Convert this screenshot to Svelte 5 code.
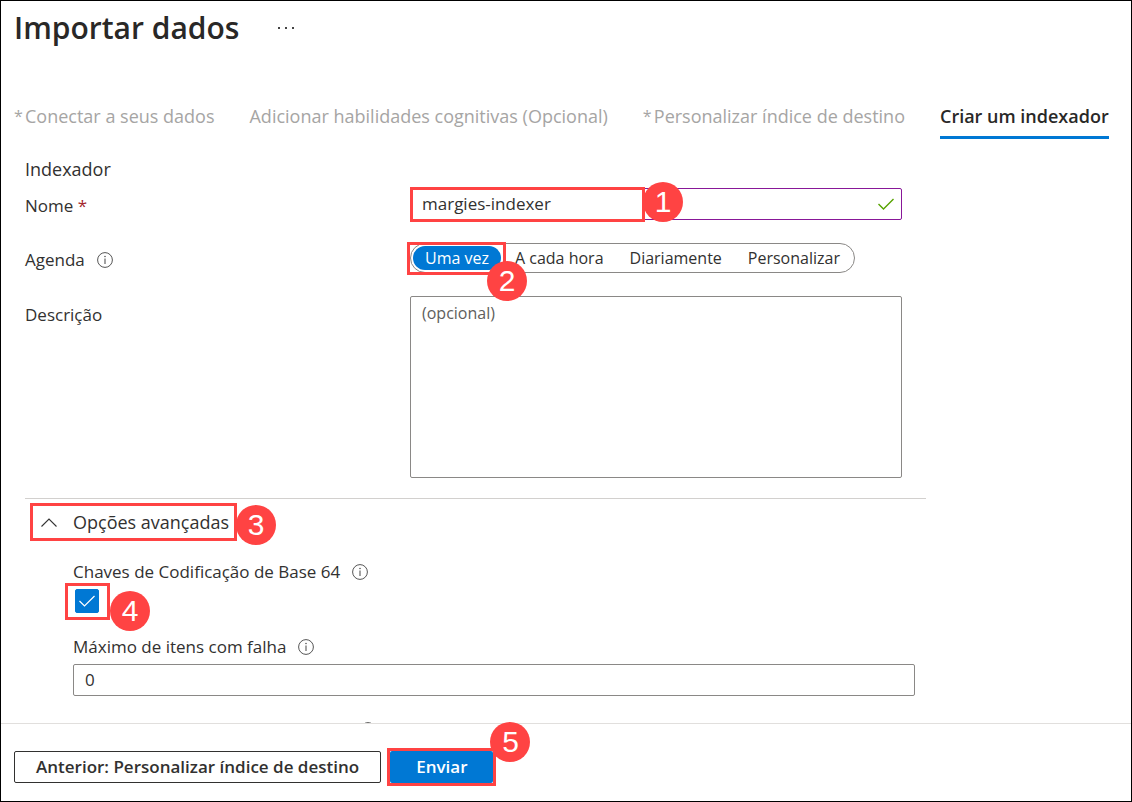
<script>
  const tabs = [
    { label: 'Conectar a seus dados', required: true },
    { label: 'Adicionar habilidades cognitivas (Opcional)' },
    { label: 'Personalizar índice de destino', required: true },
    { label: 'Criar um indexador', active: true }
  ];
  const schedules = ['Uma vez', 'A cada hora', 'Diariamente', 'Personalizar'];

  let name = $state('margies-indexer');
  let schedule = $state('Uma vez');
  let description = $state('');
  let open = $state(true);
  let base64 = $state(true);
  let maxFailed = $state('0');
</script>

{#snippet info(label)}
  <button class="info" type="button" aria-label={label}>
    <svg viewBox="0 0 16 16" width="16" height="16" aria-hidden="true">
      <circle cx="8" cy="8" r="7.4" fill="none" stroke="#555" stroke-width="1" />
      <path d="M8 6.6V12" stroke="#555" stroke-width="1.1" />
      <circle cx="8" cy="4.5" r="0.8" fill="#555" />
    </svg>
  </button>
{/snippet}

<div class="page">
  <header>
    <h1>Importar dados</h1>
    <button class="more" type="button" aria-label="Mais opções">
      <svg viewBox="0 0 16 4" width="16" height="4" aria-hidden="true">
        <path d="M0 1h2v2H0zM7 1h2v2H7zM14 1h2v2h-2z" fill="#444" />
      </svg>
    </button>
  </header>

  <nav>
    {#each tabs as tab}
      <button class="tab" class:active={tab.active} type="button">
        {#if tab.required}<span class="star">*</span>{/if}<span class="tab-label">{tab.label}</span>
      </button>
    {/each}
  </nav>

  <main>
    <h2>Indexador</h2>
    <div class="fields">
      <label class="caption" for="name">Nome <span class="required">*</span></label>
      <div class="control">
        <input id="name" class="text valid" type="text" bind:value={name} />
        <svg class="valid-mark" viewBox="0 0 16 12" width="16" height="12" aria-hidden="true">
          <path d="M0.5 6L5.5 11L15.5 1" fill="none" stroke="#57a300" stroke-width="1.4" />
        </svg>
        <span class="mark mark-name"><span class="badge">1</span></span>
      </div>

      <div class="caption label-row" id="schedule-label">Agenda {@render info('Sobre a agenda')}</div>
      <div class="control">
        <div class="pills" role="radiogroup" aria-labelledby="schedule-label">
          {#each schedules as item}
            <label class="pill" class:selected={schedule === item}>
              <input type="radio" name="schedule" value={item} bind:group={schedule} />{item}
            </label>
          {/each}
        </div>
        <span class="mark mark-schedule"><span class="badge">2</span></span>
      </div>

      <label class="caption top" for="description">Descrição</label>
      <textarea id="description" placeholder="(opcional)" bind:value={description}></textarea>
    </div>

    <section>
      <button class="expander" type="button" aria-expanded={open} onclick={() => (open = !open)}>
        <svg viewBox="0 0 16 9" width="16" height="9" aria-hidden="true">
          <path d="M0.5 8.5L8 1L15.5 8.5" fill="none" stroke="#333" stroke-width="1.1" />
        </svg>
        <span>Opções avançadas</span>
        <span class="mark mark-expander"><span class="badge">3</span></span>
      </button>
      {#if open}
        <div class="advanced">
          <div class="label-row">
            <label for="base64">Chaves de Codificação de Base 64</label>
            {@render info('Sobre as chaves')}
          </div>
          <div class="check">
            <input id="base64" type="checkbox" bind:checked={base64} />
            {#if base64}
              <svg viewBox="0 0 16 12" width="16" height="12" aria-hidden="true">
                <path d="M0.5 6L5.5 11L15.5 1" fill="none" stroke="#fff" stroke-width="1.2" />
              </svg>
            {/if}
            <span class="mark mark-check"><span class="badge">4</span></span>
          </div>
          <div class="label-row">
            <label for="max-failed">Máximo de itens com falha</label>
            {@render info('Sobre o máximo de itens')}
          </div>
          <input id="max-failed" class="text" type="text" bind:value={maxFailed} />
          <div class="label-row next">{@render info('Sobre o lote')}</div>
        </div>
      {/if}
    </section>
  </main>

  <footer>
    <button class="secondary" type="button">Anterior: Personalizar índice de destino</button>
    <div class="submit">
      <button class="primary" type="button">Enviar</button>
      <span class="mark mark-submit"><span class="badge">5</span></span>
    </div>
  </footer>
</div>

<style>
  :global(body) {
    background: #fff;
  }
  .page,
  .page * {
    box-sizing: border-box;
  }
  .page {
    display: flex;
    flex-direction: column;
    height: 100vh;
    border: 1px solid #000;
    color: #323130;
    font: 18px/24px 'Open Sans', 'Noto Sans', sans-serif;
  }
  button,
  input,
  textarea {
    margin: 0;
    color: inherit;
    font: inherit;
  }
  button {
    padding: 0;
    border: 0;
    background: none;
    cursor: pointer;
  }
  svg {
    display: block;
    flex: none;
  }
  header {
    display: flex;
    align-items: center;
    gap: 39px;
    padding: 7px 13px 6px;
  }
  h1 {
    margin: 0;
    font-size: 30px;
    line-height: 40px;
    font-weight: 600;
    color: #292827;
  }
  nav {
    display: flex;
    flex: none;
    gap: 35px;
    padding: 50px 13px 0;
    white-space: nowrap;
  }
  .tab {
    display: flex;
    padding: 0 0 8px;
    border-bottom: 3px solid transparent;
    color: #a6a5a4;
  }
  .tab.active {
    border-color: #0078d4;
    color: #292827;
    font-weight: 600;
  }
  .star {
    width: 11px;
    text-align: left;
    font-size: 16px;
  }
  main {
    flex: 1;
    min-height: 0;
    overflow: hidden;
    padding: 18px 24px 0;
  }
  h2 {
    margin: 0 0 7px;
    font: inherit;
  }
  .fields {
    display: grid;
    grid-template-columns: 385px minmax(0, 1fr);
    row-gap: 23px;
    align-items: center;
    max-width: 877px;
    font-size: 17px;
  }
  .caption {
    padding-top: 3px;
  }
  .required {
    color: #a4262c;
  }
  .label-row {
    display: flex;
    align-items: center;
    gap: 12px;
  }
  .info {
    flex: none;
  }
  .control {
    position: relative;
  }
  .text {
    display: block;
    width: 100%;
    height: 32px;
    padding: 0 11px 1px;
    border: 1px solid #8a8886;
    border-radius: 2px;
    background: #fff;
  }
  .text.valid {
    border-color: #881798;
    padding-right: 40px;
  }
  .valid-mark {
    position: absolute;
    top: 10px;
    right: 8px;
  }
  .pills {
    display: inline-flex;
    gap: 2px;
    padding: 2px;
    border: 1px solid #8a8886;
    border-radius: 16px;
    font-size: 16px;
    vertical-align: top;
  }
  .pill {
    padding: 0 12px;
    border-radius: 12px;
    white-space: nowrap;
    cursor: pointer;
  }
  .pill input {
    position: absolute;
    opacity: 0;
    pointer-events: none;
  }
  .pill.selected {
    background: #0078d4;
    color: #fff;
  }
  .caption.top {
    align-self: start;
    padding-top: 7px;
  }
  textarea {
    display: block;
    width: 100%;
    height: 182px;
    padding: 4px 11px;
    border: 1px solid #8a8886;
    border-radius: 2px;
    font-size: 16px;
    resize: none;
  }
  textarea::placeholder {
    color: #605e5c;
    opacity: 1;
  }
  section {
    max-width: 901px;
    margin-top: 20px;
    border-top: 1px solid #d2d0ce;
  }
  .expander {
    position: relative;
    display: flex;
    align-items: center;
    gap: 16px;
    height: 38px;
    margin: 4px 0 0 5px;
    padding: 0 8px 0 11px;
  }
  .advanced {
    padding: 19px 11px 0 48px;
    font-size: 17px;
  }
  .check {
    position: relative;
    display: grid;
    place-items: center;
    width: 24px;
    height: 24px;
    margin: 5px 0 22px 2px;
  }
  .check input {
    grid-area: 1 / 1;
    width: 24px;
    height: 24px;
    appearance: none;
    border: 1px solid #323130;
    border-radius: 2px;
  }
  .check input:checked {
    border-color: #0078d4;
    background: #0078d4;
  }
  .check svg {
    grid-area: 1 / 1;
    z-index: 1;
    pointer-events: none;
  }
  .advanced .text {
    margin-top: 5px;
  }
  .next {
    margin-top: 26px;
    padding-left: 287px;
  }
  footer {
    display: flex;
    flex: none;
    gap: 9px;
    padding: 27px 13px 18px;
    border-top: 1px solid #e1dfdd;
    font-size: 17px;
  }
  footer button {
    height: 32px;
    border-radius: 2px;
    font-weight: 600;
  }
  .secondary {
    padding: 0 21px;
    border: 1px solid #323130;
  }
  .submit {
    position: relative;
  }
  .primary {
    padding: 0 26px;
    background: #0078d4;
    color: #fff;
  }
  /* Numbered step highlights laid over the controls */
  .mark {
    position: absolute;
    z-index: 2;
    border: 3px solid #ff4343;
    pointer-events: none;
  }
  .badge {
    position: absolute;
    width: 40px;
    height: 40px;
    border-radius: 50%;
    background: #ff4343;
    color: #fff;
    font: 30px/40px 'Liberation Sans', Arial, sans-serif;
    text-align: center;
  }
  .mark-name {
    top: -1px;
    left: 0;
    width: 235px;
    height: 35px;
  }
  .mark-name .badge {
    top: -8px;
    left: 230px;
  }
  .mark-schedule {
    top: -1px;
    left: -3px;
    width: 99px;
    height: 33px;
  }
  .mark-schedule .badge {
    top: 16px;
    left: 77px;
  }
  .mark-expander {
    inset: 0;
  }
  .mark-expander .badge {
    top: -1px;
    left: calc(100% + 2px);
  }
  .mark-check {
    inset: -6px -11px -7px -10px;
  }
  .mark-check .badge {
    top: 5px;
    left: calc(100% + 3px);
  }
  .mark-submit {
    inset: -3px;
  }
  .mark-submit .badge {
    top: -29px;
    right: -37px;
  }
</style>
